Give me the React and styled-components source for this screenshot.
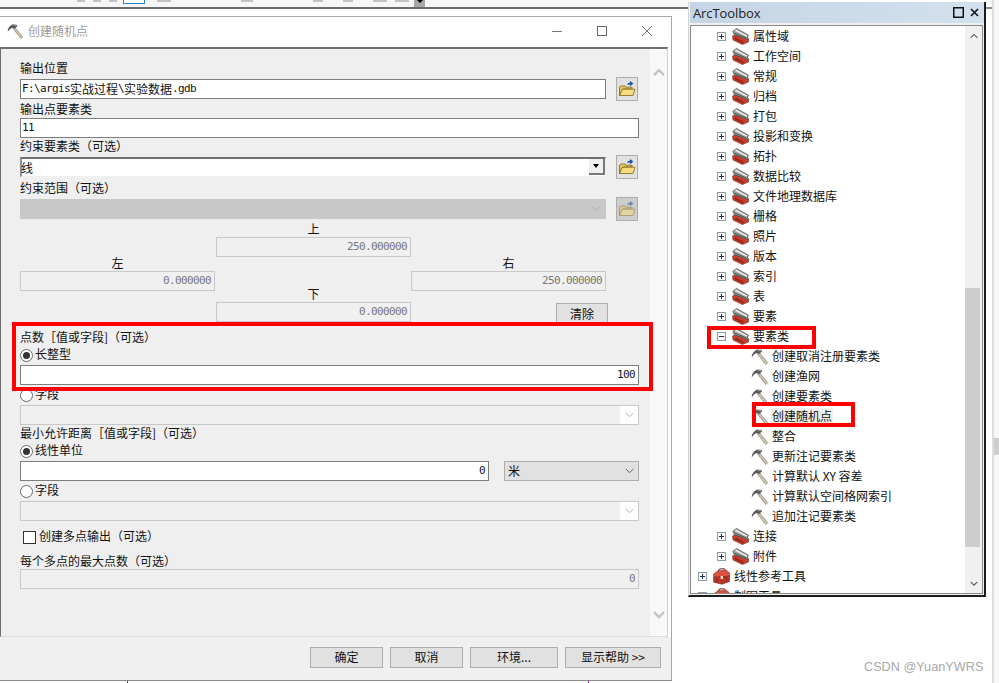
import React from "react";
import styled, { createGlobalStyle } from "styled-components";

const cjk = `"Noto Sans CJK SC", "Liberation Sans", sans-serif`;
const mono = `"DejaVu Sans Mono", "Noto Sans CJK SC", monospace`;

const GlobalStyle = createGlobalStyle`
html, body {
margin: 0;
padding: 0;
background: #fff;
}
* {
box-sizing: border-box;
}
`;

const Page = styled.div`
position: relative;
display: flex;
width: 999px;
height: 683px;
overflow: hidden;
background: #fff;
font-family: ${cjk};
font-size: 12px;
color: #111;
`;

const LeftColumn = styled.div`
width: 688px;
flex: none;
`;

const TopStrip = styled.div`
display: flex;
align-items: flex-start;
height: 9px;
background: #f6f6f6;
border-bottom: 2px solid #6b6b6b;
`;

const StripBit = styled.span`
height: 2px;
width: ${(p) => p.$w}px;
margin-left: ${(p) => p.$gap}px;
background: #c4c4c4;
`;

const StripSelected = styled.span`
width: 22px;
height: 4px;
margin-left: 6px;
background: #fff;
border: 1px solid #2f7fc8;
border-top: 0;
`;

const StripDrop = styled.span`
display: flex;
justify-content: center;
width: 11px;
height: 7px;
margin-left: 5px;
background: #a8a8a8;
&::after {
content: "";
border: 3px solid transparent;
border-top: 3px solid #000;
}
`;

const Dialog = styled.div`
display: flex;
flex-direction: column;
width: 672px;
height: 665px;
margin-top: 7px;
background: #fff;
border: 1px solid #a8a8a8;
border-left: 0;
border-bottom-color: #8a8a8a;
`;

const TitleBar = styled.div`
display: flex;
align-items: center;
height: 30px;
flex: none;
padding: 0 0 3px 7px;
`;

const TitleText = styled.span`
margin-left: 5px;
color: #9c9c9c;
font-size: 12px;
`;

const WindowButtons = styled.div`
display: flex;
align-items: center;
gap: 35px;
margin-left: auto;
padding-right: 19px;
color: #555;
`;

const Client = styled.div`
display: flex;
height: 590px;
flex: none;
margin-right: 3px;
background: #f8f8f8;
border-top: 2px solid #6e6e6e;
border-left: 1px solid #6e6e6e;
border-right: 1px solid #cfcfcf;
border-bottom: 1px solid #dcdcdc;
`;

const Form = styled.div`
width: 649px;
flex: none;
padding: 14px 0 0 19px;
background: #efefef;
`;

const ScrollTrack = styled.div`
display: flex;
flex: 1;
flex-direction: column;
align-items: center;
justify-content: space-between;
padding: 19px 0 17px;
`;

const Label = styled.div`
height: ${(p) => p.$h || 14}px;
margin-top: ${(p) => p.$top || 0}px;
line-height: 10px;
white-space: nowrap;
`;

const Row = styled.div`
display: flex;
align-items: center;
gap: 10px;
height: 24px;
width: 619px;
`;

const InputBox = styled.div`
display: flex;
align-items: center;
justify-content: ${(p) => (p.$right ? "flex-end" : "flex-start")};
width: ${(p) => p.$w || 619}px;
height: 20px;
flex: none;
margin-top: ${(p) => p.$top || 0}px;
padding: 0 3px 2px 1px;
background: ${(p) => (p.$off ? "#f0f0f0" : "#fff")};
border: 1px solid ${(p) => (p.$off ? "#c8c8c8" : "#7d7d7d")};
color: ${(p) => (p.$off ? "#777" : "#111")};
font-family: ${mono};
font-size: 11px;
letter-spacing: -0.62px;
white-space: pre;
`;

const Han = styled.span`
font-family: ${cjk};
font-size: 12px;
letter-spacing: 0;
`;

const DropBox = styled.div`
display: flex;
align-items: center;
justify-content: flex-end;
width: ${(p) => p.$w || 619}px;
height: 20px;
flex: none;
margin-top: ${(p) => p.$top || 0}px;
background: ${(p) => (p.$fill ? p.$fill : "#fff")};
border: 1px solid ${(p) => p.$edge || "#c8c8c8"};
`;

const DropLine = styled(DropBox)`
justify-content: space-between;
border-color: #efefef;
border-top: 2px solid #707070;
border-left: 2px solid #909090;
background: #fff;
height: 20px;
`;

const DropText = styled.span`
margin-right: auto;
margin-left: ${(p) => p.$shift || 0}px;
padding-left: ${(p) => p.$pad || 0}px;
line-height: 12px;
`;

const ArrowButton = styled.span`
display: flex;
align-items: center;
justify-content: center;
width: 16px;
height: 16px;
margin-bottom: 1px;
background: #f0f0f0;
border-right: 2px solid #777;
border-bottom: 2px solid #777;
&::after {
content: "";
margin-top: 3px;
border: 3.5px solid transparent;
border-top: 4px solid #000;
}
`;

const ChevronCell = styled.span`
display: flex;
align-items: center;
justify-content: center;
width: 18px;
height: 18px;
flex: none;
background: ${(p) => p.$bg || "transparent"};
`;

const FolderButton = styled.button`
display: flex;
align-items: center;
justify-content: center;
width: 22px;
height: 24px;
flex: none;
padding: 0;
background: ${(p) => (p.$off ? "#cdcdcd" : "#e1e1e1")};
border: 1px solid #adadad;
`;

const ExtentGrid = styled.div`
display: grid;
grid-template-columns: 196px 195px 197px;
grid-template-rows: 14px 20px 14px 20px 11px 20px;
width: 588px;
margin-top: 2px;
`;

const ExtentLabel = styled.div`
grid-column: ${(p) => p.$col};
grid-row: ${(p) => p.$row};
width: 195px;
line-height: ${(p) => p.$lh || 12}px;
text-align: center;
`;

const ExtentInput = styled(InputBox)`
grid-column: ${(p) => p.$col};
grid-row: ${(p) => p.$row};
`;

const ClearButton = styled.button`
grid-column: 3;
grid-row: 6;
justify-self: end;
width: 52px;
height: 20px;
margin-top: 1px;
padding: 0;
background: #e1e1e1;
border: 1px solid #adadad;
font-family: ${cjk};
font-size: 12px;
color: #111;
`;

const RadioRow = styled.label`
display: flex;
align-items: center;
gap: 2px;
height: 14px;
margin-top: ${(p) => p.$top || 0}px;
line-height: 12px;
`;

const RadioDot = styled.span`
display: flex;
align-items: center;
justify-content: center;
width: 13px;
height: 13px;
flex: none;
background: #fff;
border: 1px solid #6a6a6a;
border-radius: 50%;
&::after {
content: "";
display: ${(p) => (p.$on ? "block" : "none")};
width: 7px;
height: 7px;
border-radius: 50%;
background: #333;
}
`;

const RowText = styled.span`
margin-top: -2px;
`;

const CheckRow = styled.label`
display: flex;
align-items: center;
gap: 3px;
height: 14px;
margin-top: 9px;
padding-left: 3px;
line-height: 12px;
`;

const CheckBox = styled.span`
width: 13px;
height: 13px;
flex: none;
background: #fff;
border: 1px solid #333;
`;

const InlineRow = styled.div`
display: flex;
gap: 15px;
margin-top: 3px;
`;

const Footer = styled.div`
display: flex;
flex: 1;
justify-content: flex-end;
align-items: flex-start;
gap: 7px;
padding: 10px 10px 0 0;
background: #f0f0f0;
`;

const FooterButton = styled.button`
width: ${(p) => p.$w}px;
height: 21px;
padding: 0 0 2px;
background: #e1e1e1;
border: 1px solid #adadad;
font-family: ${cjk};
font-size: 12px;
color: #111;
`;

const BottomMarks = styled.div`
display: flex;
height: 2px;
`;

const Tick = styled.span`
width: 1px;
height: 2px;
margin-left: ${(p) => p.$gap}px;
background: #8a1a8a;
`;

const Toolbox = styled.div`
display: flex;
flex-direction: column;
width: 298px;
height: 595px;
flex: none;
margin-top: 2px;
padding: 0 0 1px 1px;
background: #f0f0f0;
border-left: 1px solid #d4d4d4;
border-right: 2px solid #1c1c1c;
border-bottom: 2px solid #1c1c1c;
`;

const ToolboxTitle = styled.div`
display: flex;
align-items: center;
justify-content: space-between;
height: 21px;
flex: none;
padding: 0 5px 0 3px;
background: linear-gradient(90deg, #c5d5e5, #d3e1ee);
font-family: "Open Sans", sans-serif;
font-size: 13px;
letter-spacing: -0.1px;
color: #222;
`;

const TitleIcons = styled.span`
display: flex;
align-items: center;
gap: 6px;
`;

const TreeFrame = styled.div`
display: flex;
flex: 1;
min-height: 0;
margin-top: 2px;
margin-right: 1px;
background: #fff;
border: 1px solid #8a8a8a;
`;

const Tree = styled.ul`
flex: 1;
margin: 0;
padding: 0;
overflow: hidden;
list-style: none;
`;

const TreeRow = styled.li`
display: flex;
align-items: center;
height: 20px;
padding-left: ${(p) => p.$indent}px;
`;

const Expander = styled.span`
position: relative;
width: 9px;
height: 9px;
flex: none;
margin-right: 6px;
background: #fff;
border: 1px solid #8e99a8;
&::before {
content: "";
position: absolute;
left: 1px;
top: 3px;
width: 5px;
height: 1px;
background: #1c2a55;
}
&::after {
content: "";
display: ${(p) => (p.$open ? "none" : "block")};
position: absolute;
left: 3px;
top: 1px;
width: 1px;
height: 5px;
background: #1c2a55;
}
`;

const TreeIcon = styled.span`
display: flex;
width: 17px;
height: 17px;
flex: none;
margin-right: 4px;
`;

const TreeText = styled.span`
padding: 0 1px;
margin-left: -1px;
line-height: 16px;
white-space: nowrap;
background: ${(p) => (p.$selected ? "#eeeeee" : "transparent")};
`;

const TreeScroll = styled.div`
display: flex;
flex-direction: column;
width: 17px;
flex: none;
background: #f0f0f0;
`;

const TreeArrow = styled.div`
display: flex;
align-items: center;
justify-content: center;
height: 19px;
flex: none;
margin-top: ${(p) => (p.$end ? "auto" : 0)};
`;

const TreeThumb = styled.div`
width: 15px;
height: 259px;
flex: none;
margin-top: 243px;
background: #cdcdcd;
`;

const RightEdge = styled.div`
position: relative;
flex: 1;
`;

const EdgeTop = styled.div`
width: 6px;
height: 2px;
margin-top: 7px;
background: #8a8a8a;
`;

const EdgeLine = styled.div`
display: flex;
flex-direction: column;
align-items: flex-end;
position: absolute;
top: 0;
left: 6px;
right: 0;
bottom: 0;
padding-top: 438px;
background: #f8f8f8;
border-left: 2px solid #dedede;
`;

const EdgeThumb = styled.div`
width: 100%;
height: 17px;
background: #cdcdcd;
`;

const Highlight = styled.div`
position: absolute;
left: ${(p) => p.$x}px;
top: ${(p) => p.$y}px;
width: ${(p) => p.$w}px;
height: ${(p) => p.$h}px;
border: ${(p) => p.$b}px solid #ff0000;
pointer-events: none;
`;

const Watermark = styled.div`
position: absolute;
left: 864px;
top: 660px;
font-family: "Liberation Sans", sans-serif;
font-size: 12.7px;
color: #a8a8a8;
white-space: nowrap;
`;

const Chevron = ({ up, size = 12, width = 1.2, color = "#777" }) => (
  <svg width={size} height={size * 0.7} viewBox="0 0 12 8" fill="none">
    <path
      d={up ? "M1 7 L6 2 L11 7" : "M1 1 L6 6 L11 1"}
      stroke={color}
      strokeWidth={width}
    />
  </svg>
);

const Hammer = ({ size = 17 }) => (
  <svg width={size} height={size} viewBox="0 0 17 17">
    <path d="M6.4 5.8 L8.2 4.4 L16.6 14.8 L14.8 16.6 Z" fill="#cfc4ae" stroke="#857d6c" strokeWidth="0.7" />
    <path d="M0.6 8.4 C1 5.4 3.4 2.4 6.4 1.4 L10.6 2 L11 3.4 L8 6.2 L6.2 5 C4.2 5.4 2.2 6.6 1.4 8.8 Z" fill="#5a5a5a" />
    <path d="M6.4 2.2 L10 2.8" stroke="#b4b4b4" strokeWidth="0.7" />
  </svg>
);

const ToolSet = () => (
  <svg width="17" height="17" viewBox="0 0 17 17">
    <path d="M0.6 8 L3 7 L14 11.4 L16.8 10.4 L16.4 14 L10.4 16.6 L1 12 Z" fill="#c93d2b" stroke="#7a1f16" strokeWidth="0.6" />
    <path d="M3 9.4 L11.4 13.4 L11.4 15.4 L3 11.4 Z" fill="#8e261b" />
    <path d="M0.8 3.4 L4.4 0.4 L16.4 7.2 L15 11 L2.4 6.8 Z" fill="#a8a8a8" stroke="#3a3a3a" strokeWidth="0.7" />
    <path d="M3.4 2.2 L14.8 8" stroke="#f4f4f4" strokeWidth="1.3" />
    <path d="M2.4 5 L14 9.8" stroke="#444" strokeWidth="0.9" />
  </svg>
);

const RedBox = () => (
  <svg width="17" height="17" viewBox="0 0 17 17">
    <path d="M0.6 6 L4.6 3 L13.4 2.2 L16.6 5 L16.6 8.2 L0.6 9.4 Z" fill="#d85340" stroke="#8c2318" strokeWidth="0.6" />
    <path d="M0.6 9.4 L16.6 8.2 L16.6 13.4 L9 16.2 L0.6 14.2 Z" fill="#b8352a" stroke="#8c2318" strokeWidth="0.6" />
    <path d="M5.4 3 L6.4 1 L11.4 0.8 L12.2 2.4" fill="none" stroke="#6a1a12" strokeWidth="1" />
    <rect x="7.6" y="8" width="2.4" height="3" fill="#ead9b8" />
    <path d="M3.6 9.6 L3.6 14 M13.6 8.8 L13.6 13.6" stroke="#8c2318" strokeWidth="0.7" />
  </svg>
);

const Folder = ({ off }) => (
  <svg width="18" height="18" viewBox="0 0 18 18" opacity={off ? 0.55 : 1}>
    <path d="M1.5 15.5 L1.5 7 L3 6 L7 6 L8 7.2 L14 7.2 L14 9 L5 9 Z" fill="#e6c560" stroke="#7d6414" strokeWidth="0.8" />
    <path d="M1.5 15.5 L4.4 9.2 L17 9.2 L15 15.5 Z" fill="#f6dc7e" stroke="#7d6414" strokeWidth="0.8" />
    <path d="M9 5 C9.6 3.4 10.6 2.8 12 2.8 L12 1 L15.4 3.6 L12 6.2 L12 4.6 C10.8 4.6 10 4.8 9 5 Z" fill="#1a4f9c" />
  </svg>
);

const WinMin = () => (
  <svg width="10" height="10" viewBox="0 0 10 10"><path d="M0 5.5 H10" stroke="#777" /></svg>
);
const WinMax = () => (
  <svg width="10" height="10" viewBox="0 0 10 10"><rect x="0.5" y="0.5" width="9" height="9" fill="none" stroke="#666" /></svg>
);
const WinClose = () => (
  <svg width="10" height="10" viewBox="0 0 10 10"><path d="M0 0 L10 10 M10 0 L0 10" stroke="#777" /></svg>
);

const treeRows = [
  ["属性域", 1], ["工作空间", 1], ["常规", 1], ["归档", 1], ["打包", 1],
  ["投影和变换", 1], ["拓扑", 1], ["数据比较", 1], ["文件地理数据库", 1], ["栅格", 1],
  ["照片", 1], ["版本", 1], ["索引", 1], ["表", 1], ["要素", 1],
  ["要素类", 1, "open"],
  ["创建取消注册要素类", 2], ["创建渔网", 2], ["创建要素类", 2], ["创建随机点", 2, "selected"],
  ["整合", 2], ["更新注记要素类", 2], ["计算默认 XY 容差", 2], ["计算默认空间格网索引", 2], ["追加注记要素类", 2],
  ["连接", 1], ["附件", 1], ["线性参考工具", 0], ["制图工具", 0],
];

const indents = [7, 26, 60];

const TreeItem = ({ name, level, state }) => (
  <TreeRow $indent={indents[level]}>
    {level < 2 && <Expander $open={state === "open"} />}
    <TreeIcon>
      {level === 0 && <RedBox />}
      {level === 1 && <ToolSet />}
      {level === 2 && <Hammer />}
    </TreeIcon>
    <TreeText $selected={state === "selected"}>{name}</TreeText>
  </TreeRow>
);

const App = () => {
  return (
    <Page>
      <GlobalStyle />
      <LeftColumn>
        <TopStrip>
          <StripBit $w={8} $gap={77} />
          <StripBit $w={8} $gap={8} />
          <StripBit $w={8} $gap={8} />
          <StripSelected />
          <StripBit $w={14} $gap={12} />
          <StripBit $w={12} $gap={70} />
          <StripBit $w={10} $gap={60} />
          <StripBit $w={10} $gap={20} />
          <StripBit $w={14} $gap={20} />
          <StripBit $w={14} $gap={8} />
          <StripDrop />
        </TopStrip>
        <Dialog>
          <TitleBar>
            <Hammer size={16} />
            <TitleText>创建随机点</TitleText>
            <WindowButtons>
              <WinMin />
              <WinMax />
              <WinClose />
            </WindowButtons>
          </TitleBar>
          <Client>
            <Form>
              <Label>输出位置</Label>
              <Row>
                <InputBox $w={586}>F:\argis<Han>实战过程</Han>\<Han>实验数据</Han>.gdb</InputBox>
                <FolderButton><Folder /></FolderButton>
              </Row>
              <Label $top={3}>输出点要素类</Label>
              <InputBox>11</InputBox>
              <Label $top={3}>约束要素类（可选）</Label>
              <Row>
                <DropLine $w={586}>
                  <DropText $shift={-1}>线</DropText>
                  <ArrowButton />
                </DropLine>
                <FolderButton><Folder /></FolderButton>
              </Row>
              <Label $top={4}>约束范围（可选）</Label>
              <Row>
                <DropBox $w={586} $fill="#c8c8c8">
                  <ChevronCell><Chevron color="#aaa" size={9} /></ChevronCell>
                </DropBox>
                <FolderButton $off><Folder off /></FolderButton>
              </Row>
              <ExtentGrid>
                <ExtentLabel $col={2} $row={1}>上</ExtentLabel>
                <ExtentInput $col={2} $row={2} $w={195} $off $right>250.000000</ExtentInput>
                <ExtentLabel $col={1} $row={3}>左</ExtentLabel>
                <ExtentLabel $col={3} $row={3}>右</ExtentLabel>
                <ExtentInput $col={1} $row={4} $w={195} $off $right>0.000000</ExtentInput>
                <ExtentInput $col={3} $row={4} $w={195} $off $right>250.000000</ExtentInput>
                <ExtentLabel $col={2} $row={5} $lh={6}>下</ExtentLabel>
                <ExtentInput $col={2} $row={6} $w={195} $off $right>0.000000</ExtentInput>
                <ClearButton>清除</ClearButton>
              </ExtentGrid>
              <Label $top={10}>点数［值或字段]（可选）</Label>
              <RadioRow $top={2}><RadioDot $on /><RowText>长整型</RowText></RadioRow>
              <InputBox $top={3} $right>100</InputBox>
              <RadioRow $top={3}><RadioDot /><RowText>字段</RowText></RadioRow>
              <DropBox $top={3} $fill="#f0f0f0">
                <ChevronCell $bg="#fff"><Chevron color="#aaa" size={9} /></ChevronCell>
              </DropBox>
              <Label $top={3}>最小允许距离［值或字段]（可选）</Label>
              <RadioRow $top={2}><RadioDot $on /><RowText>线性单位</RowText></RadioRow>
              <InlineRow>
                <InputBox $w={469} $right>0</InputBox>
                <DropBox $w={135} $fill="#e1e1e1" $edge="#adadad">
                  <DropText $pad={3}>米</DropText>
                  <ChevronCell><Chevron color="#555" size={9} /></ChevronCell>
                </DropBox>
              </InlineRow>
              <RadioRow $top={3}><RadioDot /><RowText>字段</RowText></RadioRow>
              <DropBox $top={3} $fill="#f0f0f0">
                <ChevronCell $bg="#fff"><Chevron color="#aaa" size={9} /></ChevronCell>
              </DropBox>
              <CheckRow><CheckBox /><RowText>创建多点输出（可选）</RowText></CheckRow>
              <Label $top={12} $h={13}>每个多点的最大点数（可选）</Label>
              <InputBox $off $right>0</InputBox>
            </Form>
            <ScrollTrack>
              <Chevron up size={12} width={2.4} color="#c4c4c4" />
              <Chevron size={12} width={2.4} color="#c4c4c4" />
            </ScrollTrack>
          </Client>
          <Footer>
            <FooterButton $w={73}>确定</FooterButton>
            <FooterButton $w={73}>取消</FooterButton>
            <FooterButton $w={88}>环境...</FooterButton>
            <FooterButton $w={96}>显示帮助 &gt;&gt;</FooterButton>
          </Footer>
        </Dialog>
        <BottomMarks>
          <Tick $gap={127} />
          <Tick $gap={460} />
        </BottomMarks>
      </LeftColumn>
      <Toolbox>
        <ToolboxTitle>
          ArcToolbox
          <TitleIcons>
            <svg width="11" height="11" viewBox="0 0 11 11"><rect x="0.75" y="0.75" width="9.5" height="9.5" fill="none" stroke="#111" strokeWidth="1.5" /></svg>
            <svg width="9" height="9" viewBox="0 0 9 9"><path d="M1 1 L8 8 M8 1 L1 8" stroke="#111" strokeWidth="1.6" /></svg>
          </TitleIcons>
        </ToolboxTitle>
        <TreeFrame>
          <Tree>
            {treeRows.map(([name, level, state]) => (
              <TreeItem key={name} name={name} level={level} state={state} />
            ))}
          </Tree>
          <TreeScroll>
            <TreeArrow><Chevron up size={8} width={1.6} color="#555" /></TreeArrow>
            <TreeThumb />
            <TreeArrow $end><Chevron size={8} width={1.6} color="#555" /></TreeArrow>
          </TreeScroll>
        </TreeFrame>
      </Toolbox>
      <RightEdge>
        <EdgeTop />
        <EdgeLine><EdgeThumb /></EdgeLine>
      </RightEdge>
      <Highlight $x={12} $y={322} $w={641} $h={69} $b={4} />
      <Highlight $x={707} $y={326} $w={109} $h={23} $b={4} />
      <Highlight $x={752} $y={402} $w={103} $h={25} $b={4} />
      <Watermark>CSDN @YuanYWRS</Watermark>
    </Page>
  );
};

export default App;
